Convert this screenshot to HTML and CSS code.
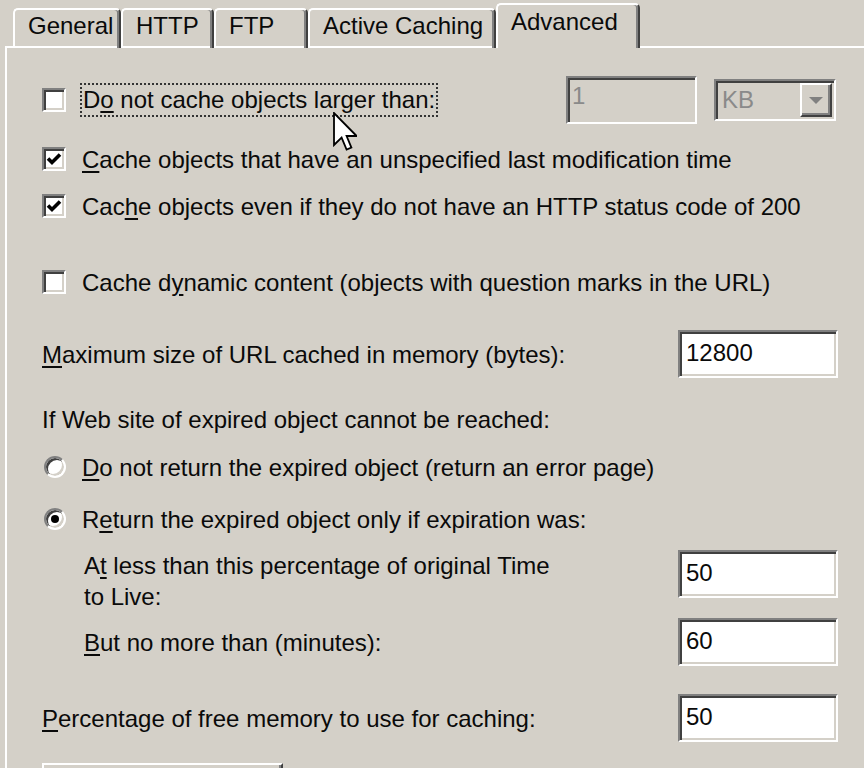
FILE: index.html
```html
<!DOCTYPE html>
<html lang="en">
<head>
<meta charset="utf-8">
<title>Advanced</title>
<link rel="stylesheet" href="styles.css">
</head>
<body>
<div class="tabs">
  <div class="tab tab-general">General</div>
  <div class="tab tab-http">HTTP</div>
  <div class="tab tab-ftp">FTP</div>
  <div class="tab tab-active">Active Caching</div>
  <div class="tab tab-advanced tab-selected">Advanced</div>
</div>
<div class="panel">
  <div class="row row-field">
    <div class="check">
      <span class="box"></span>
      <span class="label focus">D<u>o</u> not cache objects larger than:</span>
    </div>
    <div class="size-group">
      <div class="field field-disabled">1</div>
      <div class="combo">
        <span class="combo-text">KB</span>
        <span class="drop"><span class="arrow"></span></span>
      </div>
    </div>
  </div>

  <div class="check mt-18">
    <span class="box"><svg class="tick" viewBox="0 0 20 20"><polyline points="4,9.5 8,13.5 16,5.5" /></svg></span>
    <span class="label"><u>C</u>ache objects that have an unspecified last modification time</span>
  </div>
  <div class="check mt-13">
    <span class="box"><svg class="tick" viewBox="0 0 20 20"><polyline points="4,9.5 8,13.5 16,5.5" /></svg></span>
    <span class="label">Cac<u>h</u>e objects even if they do not have an HTTP status code of 200</span>
  </div>
  <div class="check mt-42">
    <span class="box"></span>
    <span class="label">Cache d<u>y</u>namic content (objects with question marks in the URL)</span>
  </div>

  <div class="row row-field mt-31">
    <span class="label"><u>M</u>aximum size of URL cached in memory (bytes):</span>
    <div class="field">12800</div>
  </div>

  <div class="line mt-25">If Web site of expired object cannot be reached:</div>

  <div class="check radio-row mt-13">
    <span class="radio"></span>
    <span class="label"><u>D</u>o not return the expired object (return an error page)</span>
  </div>
  <div class="check radio-row mt-18">
    <span class="radio radio-on"><span class="dot"></span></span>
    <span class="label">R<u>e</u>turn the expired object only if expiration was:</span>
  </div>

  <div class="row row-top sub mt-14">
    <span class="label multi">A<u>t</u> less than this percentage of original Time<br>to Live:</span>
    <div class="field">50</div>
  </div>
  <div class="row row-field sub mt-6">
    <span class="label"><u>B</u>ut no more than (minutes):</span>
    <div class="field">60</div>
  </div>

  <div class="row row-field mt-28">
    <span class="label"><u>P</u>ercentage of free memory to use for caching:</span>
    <div class="field">50</div>
  </div>

  <div class="button mt-21"></div>
</div>

<svg class="cursor" viewBox="0 0 12 21" width="24" height="42">
  <path d="M0.5,0.5 L0.5,16.5 L4.3,12.8 L6.8,18.8 L9.2,17.8 L6.8,12 L11.8,12 Z" fill="#fff" stroke="#000" stroke-width="0.9" stroke-linejoin="miter"/>
</svg>
</body>
</html>
```

FILE: styles.css
```css
html, body {
  margin: 0;
  height: 768px;
  overflow: hidden;
}

body {
  position: relative;
  background: #d4d0c8;
  font-family: "Liberation Sans", Arial, sans-serif;
  font-size: 24px;
  color: #0a0a0a;
}

u {
  text-decoration: underline;
  text-underline-offset: 3px;
  text-decoration-thickness: 2px;
}

/* Tabs */
.tabs {
  display: flex;
  align-items: flex-end;
  height: 48px;
  padding-left: 13px;
}

.tab {
  box-sizing: border-box;
  height: 40px;
  padding-left: 13px;
  border-top: 2px solid #fff;
  border-left: 2px solid #fff;
  border-right: 2px solid #404040;
  box-shadow: inset -2px 0 #808080;
  border-radius: 5px 5px 0 0;
  line-height: 32px;
  white-space: nowrap;
}

.tab-general { width: 108px; }
.tab-http { width: 93px; }
.tab-ftp { width: 94px; }
.tab-active { width: 188px; }
.tab-advanced { width: 144px; }

.tab-selected {
  position: relative;
  z-index: 1;
  height: 45px;
  line-height: 34px;
  background: #d4d0c8;
}

/* Panel */
.panel {
  margin-top: -2px;
  margin-left: 5px;
  border-top: 2px solid #fff;
  border-left: 2px solid #fff;
  padding: 28px 0 0 35px;
}

.row {
  display: flex;
  width: 796px;
}

.row-field {
  height: 48px;
  align-items: center;
  justify-content: space-between;
}

.row-top {
  align-items: flex-start;
  justify-content: space-between;
}

.sub {
  box-sizing: border-box;
  padding-left: 42px;
}

.label {
  line-height: 31px;
  white-space: nowrap;
}

.multi {
  display: block;
}

.line {
  height: 34px;
  line-height: 34px;
}

.focus {
  display: inline-block;
  border: 2px dotted #333;
  padding: 0 1px;
  line-height: 30px;
  margin-left: -2px;
}

/* Checkboxes and radios */
.check {
  display: flex;
  align-items: center;
  gap: 16px;
  height: 34px;
}

.box {
  box-sizing: border-box;
  width: 24px;
  height: 24px;
  border: 2px solid;
  border-color: #808080 #fff #fff #808080;
  box-shadow: inset 2px 2px #404040, inset -2px -2px #d4d0c8;
  background: #fff;
  display: flex;
  align-items: center;
  justify-content: center;
}

.tick {
  width: 20px;
  height: 20px;
}

.tick polyline {
  fill: none;
  stroke: #000;
  stroke-width: 3.6;
}

.radio-row {
  gap: 16px;
}

.radio {
  box-sizing: border-box;
  width: 22px;
  height: 22px;
  margin-left: 2px;
  border-radius: 50%;
  border: 2px solid;
  border-color: #808080 #fff #fff #808080;
  box-shadow: inset 2px 2px #404040, inset -2px -2px #d4d0c8;
  background: #fff;
  display: flex;
  align-items: center;
  justify-content: center;
}

.dot {
  width: 8px;
  height: 8px;
  border-radius: 50%;
  background: #000;
}

/* Fields */
.field {
  box-sizing: border-box;
  width: 160px;
  height: 48px;
  padding: 0 6px;
  border: 2px solid;
  border-color: #808080 #fff #fff #808080;
  box-shadow: inset 2px 2px #404040, inset -2px -2px #d4d0c8;
  background: #fff;
  line-height: 42px;
}

.size-group {
  display: flex;
  align-items: center;
  gap: 17px;
  margin-right: 2px;
}

.field-disabled {
  width: 131px;
  padding: 0 4px;
  background: #d4d0c8;
  color: #8a8a8a;
  line-height: 36px;
}

.combo {
  box-sizing: border-box;
  width: 122px;
  height: 42px;
  padding: 2px;
  border: 2px solid;
  border-color: #808080 #fff #fff #808080;
  box-shadow: inset 2px 2px #404040, inset -2px -2px #d4d0c8;
  display: flex;
  align-items: stretch;
}

.combo-text {
  padding-left: 4px;
  line-height: 34px;
  color: #8a8a8a;
}

.drop {
  box-sizing: border-box;
  margin-left: auto;
  width: 32px;
  border: 2px solid;
  border-color: #fff #404040 #404040 #fff;
  box-shadow: inset -2px -2px #808080;
  display: flex;
  align-items: center;
  justify-content: center;
}

.arrow {
  width: 0;
  height: 0;
  border-left: 7px solid transparent;
  border-right: 7px solid transparent;
  border-top: 7px solid #808080;
}

.button {
  box-sizing: border-box;
  width: 241px;
  height: 40px;
  border: 2px solid;
  border-color: #fff #404040 #404040 #fff;
  box-shadow: inset -2px -2px #808080;
}

/* Spacing */
.mt-6 { margin-top: 6px; }
.mt-13 { margin-top: 13px; }
.mt-14 { margin-top: 14px; }
.mt-18 { margin-top: 18px; }
.mt-21 { margin-top: 21px; }
.mt-25 { margin-top: 25px; }
.mt-28 { margin-top: 28px; }
.mt-31 { margin-top: 31px; }
.mt-42 { margin-top: 42px; }

/* Mouse pointer overlay */
.cursor {
  position: absolute;
  left: 333px;
  top: 112px;
}
```
